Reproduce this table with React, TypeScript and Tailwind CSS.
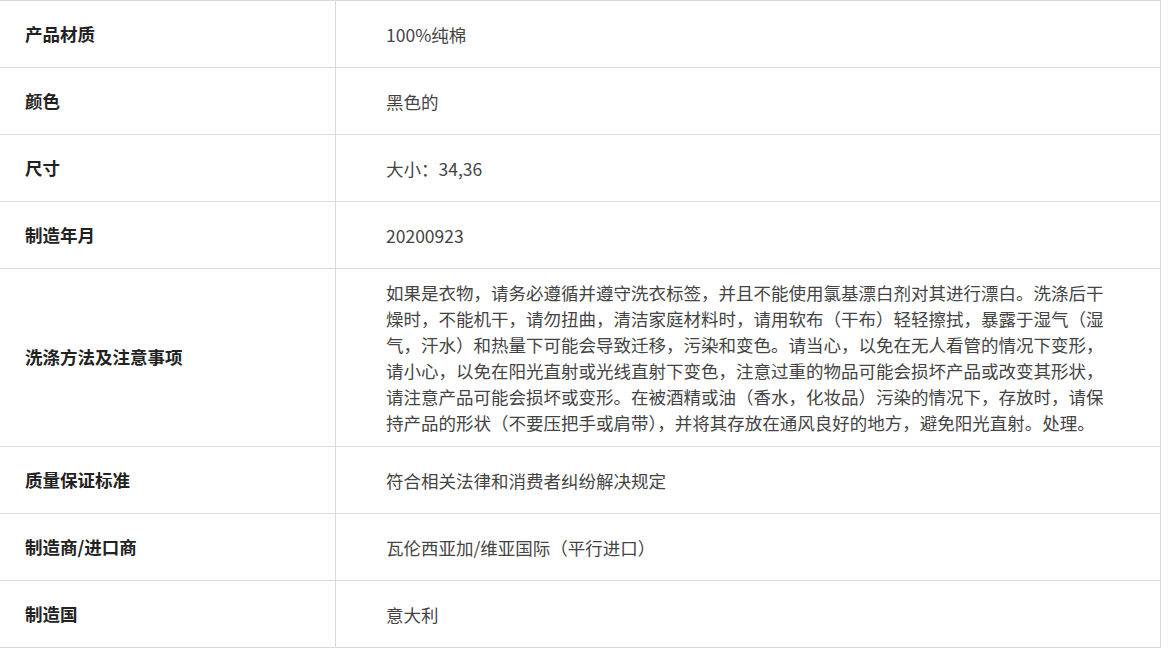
import React from "react";

const rows: { label: string; value: string }[] = [
  { label: "产品材质", value: "100%纯棉" },
  { label: "颜色", value: "黑色的" },
  { label: "尺寸", value: "大小：34,36" },
  { label: "制造年月", value: "20200923" },
  {
    label: "洗涤方法及注意事项",
    value:
      "如果是衣物，请务必遵循并遵守洗衣标签，并且不能使用氯基漂白剂对其进行漂白。洗涤后干燥时，不能机干，请勿扭曲，清洁家庭材料时，请用软布（干布）轻轻擦拭，暴露于湿气（湿气，汗水）和热量下可能会导致迁移，污染和变色。请当心，以免在无人看管的情况下变形，请小心，以免在阳光直射或光线直射下变色，注意过重的物品可能会损坏产品或改变其形状，请注意产品可能会损坏或变形。在被酒精或油（香水，化妆品）污染的情况下，存放时，请保持产品的形状（不要压把手或肩带），并将其存放在通风良好的地方，避免阳光直射。处理。",
  },
  { label: "质量保证标准", value: "符合相关法律和消费者纠纷解决规定" },
  { label: "制造商/进口商", value: "瓦伦西亚加/维亚国际（平行进口）" },
  { label: "制造国", value: "意大利" },
];

export default function App() {
  return (
    <div className="min-h-screen bg-white font-['Noto_Sans_CJK_SC',sans-serif]">
      {/* Product info table */}
      <div className="w-[1161px] border-t border-r border-[#d9d9d9]">
        {rows.map((row) => (
          <div key={row.label} className="flex border-b border-[#d9d9d9]">
            <div className="w-[336px] shrink-0 border-r border-[#d9d9d9] px-[25px] flex items-center text-[17.5px] font-bold text-[#222]">
              {row.label}
            </div>
            <div className="flex-1 min-h-[66px] pl-[50px] pr-[50px] pt-[11px] pb-[10px] flex items-center text-[17.5px] leading-[26px] text-[#444]">
              <p>{row.value}</p>
            </div>
          </div>
        ))}
      </div>
    </div>
  );
}
